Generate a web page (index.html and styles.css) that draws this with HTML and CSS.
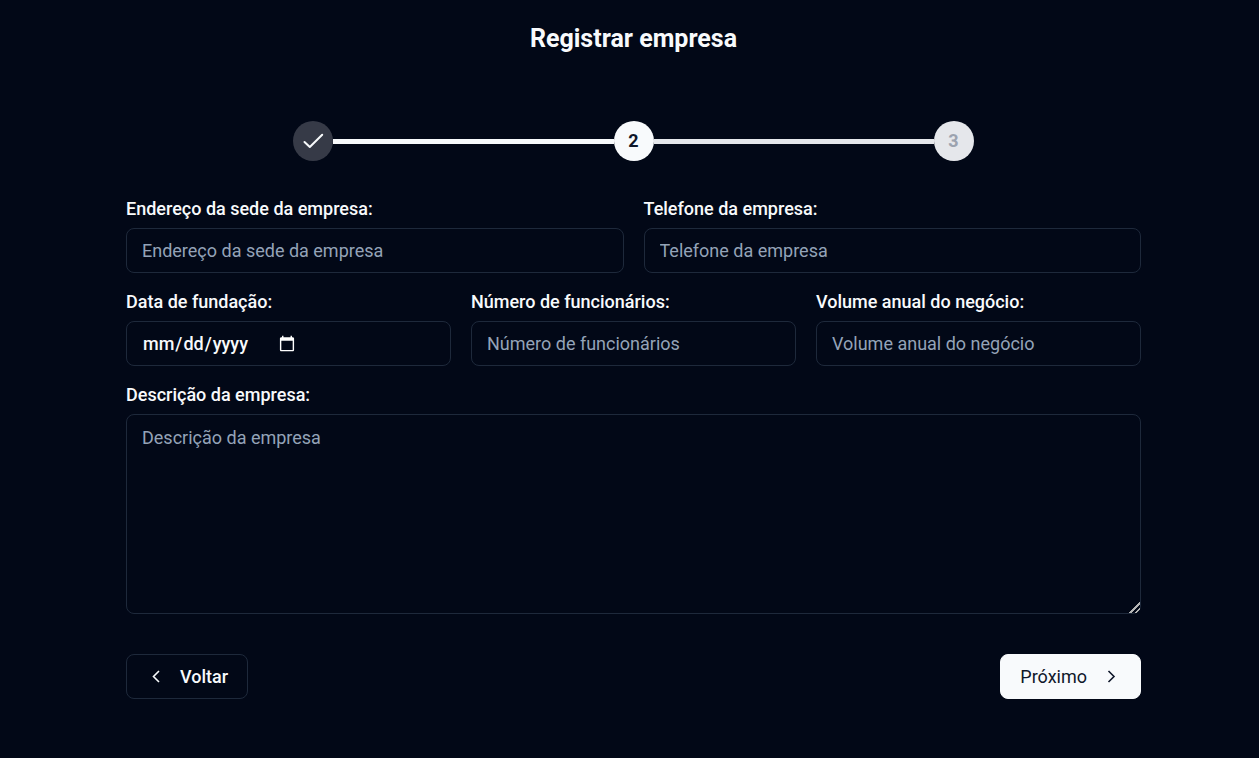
FILE: index.html
```html
<!DOCTYPE html>
<html lang="en">
<head>
    <meta charset="UTF-8">
    <meta name="viewport" content="width=device-width, initial-scale=1.0">
    <title>Registrar empresa</title>
    <link rel="stylesheet" href="styles.css">
</head>
<body>
    <main class="page">
        <h1>Registrar empresa</h1>
        <div class="stepper">
            <span class="step step-done">
                <svg width="24" height="24" viewBox="0 0 24 24" fill="none" stroke="currentColor" stroke-width="2" stroke-linecap="round" stroke-linejoin="round"><path d="M3.5 13L8.8 18L21.2 5.8"/></svg>
            </span>
            <span class="line line-done"></span>
            <span class="step step-current">2</span>
            <span class="line"></span>
            <span class="step">3</span>
        </div>
        <form class="company-form" action="#" method="post">
            <div class="form-row">
                <div class="form-group">
                    <label for="endereco">Endereço da sede da empresa:</label>
                    <input type="text" id="endereco" name="endereco" placeholder="Endereço da sede da empresa">
                </div>
                <div class="form-group">
                    <label for="telefone">Telefone da empresa:</label>
                    <input type="tel" id="telefone" name="telefone" placeholder="Telefone da empresa">
                </div>
            </div>
            <div class="form-row">
                <div class="form-group">
                    <label for="fundacao">Data de fundação:</label>
                    <input type="date" id="fundacao" name="fundacao">
                </div>
                <div class="form-group">
                    <label for="funcionarios">Número de funcionários:</label>
                    <input type="text" id="funcionarios" name="funcionarios" placeholder="Número de funcionários">
                </div>
                <div class="form-group">
                    <label for="volume">Volume anual do negócio:</label>
                    <input type="text" id="volume" name="volume" placeholder="Volume anual do negócio">
                </div>
            </div>
            <div class="form-group">
                <label for="descricao">Descrição da empresa:</label>
                <textarea id="descricao" name="descricao" placeholder="Descrição da empresa"></textarea>
            </div>
            <div class="form-actions">
                <button type="button" class="button button-back">
                    <svg width="20" height="20" viewBox="0 0 20 20" fill="none" stroke="currentColor" stroke-width="1.6"><path d="M13 4L7.5 9.5L13 15"/></svg>
                    Voltar
                </button>
                <button type="submit" class="button button-next">
                    Próximo
                    <svg width="20" height="20" viewBox="0 0 20 20" fill="none" stroke="currentColor" stroke-width="1.6"><path d="M7.5 4L13 9.5L7.5 15"/></svg>
                </button>
            </div>
        </form>
    </main>
</body>
</html>
```
FILE: styles.css
```css
* {
    box-sizing: border-box;
}
body {
    margin: 0;
    font-family: Roboto, sans-serif;
    font-size: 18px;
    line-height: 24px;
    background-color: #020817;
    color: #f8fafc;
    color-scheme: dark;
}
.page {
    padding: 21px 118px 59px 126px;
}
h1 {
    margin: 0 0 64px;
    font-size: 25px;
    line-height: 36px;
    font-weight: 700;
    text-align: center;
}
.stepper {
    display: flex;
    align-items: center;
    width: 67%;
    margin: 0 auto 36px;
}
.step {
    display: flex;
    align-items: center;
    justify-content: center;
    width: 40px;
    height: 40px;
    border-radius: 50%;
    background-color: #e5e7eb;
    color: #9ca3af;
    font-weight: 700;
}
.step-done {
    background-color: #363a47;
    color: #f8fafc;
}
.step-current {
    background-color: #f8fafc;
    color: #0f172a;
}
.line {
    flex: 1;
    height: 5px;
    background-color: #e5e7eb;
}
.line-done {
    background-color: #f8fafc;
}
.company-form {
    display: flex;
    flex-direction: column;
    gap: 17px;
}
.form-row {
    display: flex;
    gap: 20px;
}
.form-group {
    flex: 1;
    min-width: 0;
}
label {
    display: block;
    margin-bottom: 7px;
    font-weight: 500;
}
input,
textarea {
    display: flex;
    width: 100%;
    height: 45px;
    padding: 10px 15px;
    border: 1px solid #1e293b;
    border-radius: 8px;
    background-color: transparent;
    color: #f8fafc;
    font: inherit;
}
input[type="date"] {
    font-weight: 500;
}
input::placeholder,
textarea::placeholder {
    color: #94a3b8;
}
textarea {
    height: 200px;
    padding-top: 11px;
    resize: vertical;
}
textarea::-webkit-resizer {
    background: linear-gradient(135deg, transparent 63%, #b4b4b4 63%, #b4b4b4 71%, transparent 71%, transparent 81%, #b4b4b4 81%, #b4b4b4 89%, transparent 89%);
}
.form-actions {
    display: flex;
    justify-content: space-between;
    margin-top: 23px;
}
.button {
    display: flex;
    align-items: center;
    gap: 14px;
    height: 45px;
    padding: 0 19px;
    border: 1px solid #1e293b;
    border-radius: 8px;
    font: inherit;
    cursor: pointer;
}
.button-back {
    background-color: transparent;
    color: #f8fafc;
    font-weight: 500;
}
.button-next {
    border-color: #f8fafc;
    background-color: #f8fafc;
    color: #0f172a;
}
```
